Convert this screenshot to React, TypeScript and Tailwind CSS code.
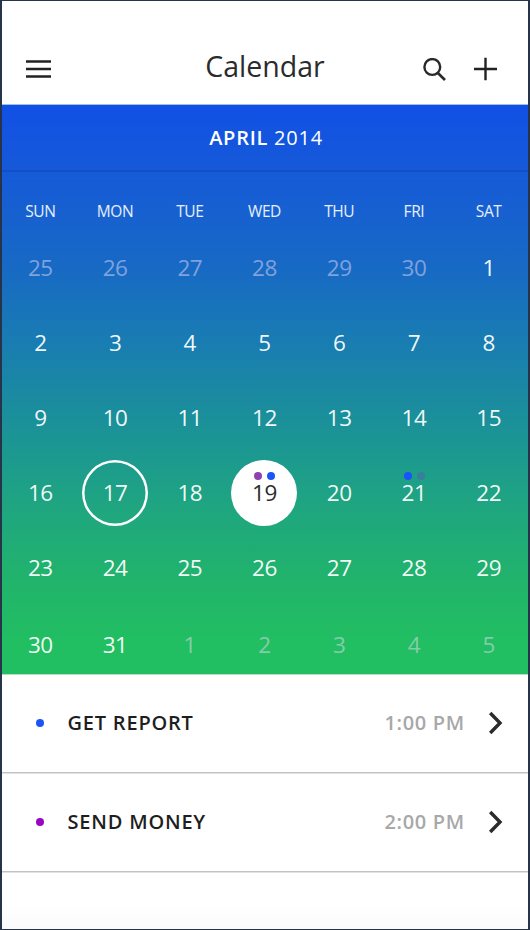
import React from "react";

type Day = { n: number; muted?: boolean; ring?: boolean; selected?: boolean; dots?: string[] };

const WEEKDAYS = ["SUN", "MON", "TUE", "WED", "THU", "FRI", "SAT"];

const range = (from: number, to: number, muted = false): Day[] =>
  Array.from({ length: to - from + 1 }, (_, i) => ({ n: from + i, muted }));

const WEEKS: Day[][] = [
  [...range(25, 30, true), { n: 1 }],
  range(2, 8),
  range(9, 15),
  [
    { n: 16 },
    { n: 17, ring: true },
    { n: 18 },
    { n: 19, selected: true, dots: ["bg-[#8f3fae]", "bg-[#1a55f7]"] },
    { n: 20 },
    { n: 21, dots: ["bg-[#1a55f7]", "bg-[#38809a]"] },
    { n: 22 },
  ],
  range(23, 29),
  [...range(30, 31), ...range(1, 5, true)],
];

const EVENTS = [
  { title: "GET REPORT", time: "1:00 PM", dot: "bg-[#1a55f7]" },
  { title: "SEND MONEY", time: "2:00 PM", dot: "bg-[#9a05c4]" },
];

function DayCell({ day }: { day: Day }) {
  const ring = day.ring ? "shadow-[inset_0_0_0_2.5px_#fff]" : "";
  const fill = day.selected ? "bg-white text-[#2b2b2d]" : day.muted ? "text-[#e6dcf5]/50" : "text-white/95";
  return (
    <div className="flex justify-center">
      <div className={`relative flex size-[66px] shrink-0 items-center justify-center rounded-full ${ring} ${fill}`}>
        <span>{day.n}</span>
        {day.dots && (
          <div className="absolute top-[12px] left-1/2 flex -translate-x-1/2 gap-[5px] pl-px">
            {day.dots.map((d) => (
              <i key={d} className={`size-2 rounded-full ${d}`} />
            ))}
          </div>
        )}
      </div>
    </div>
  );
}

export default function App() {
  return (
    <div className="h-[930px] w-[530px] bg-[#273349] px-0.5 py-px font-['Open_Sans',sans-serif]">
      <div className="flex h-full flex-col bg-gradient-to-b from-white from-97% to-[#fbfbfb]">
        <header className="grid h-[104px] shrink-0 grid-cols-[1fr_auto_1fr] items-center border-b border-[#a9bbe8] bg-white px-6 pt-[31px] text-[#2b2b2d]">
          <svg width="25" height="20" viewBox="0 0 25 20" stroke="#222" strokeWidth="2.3" className="mt-0.5">
            <path d="M0 2.5H25M0 10H25M0 17.5H25" />
          </svg>
          <h1 className="-mt-[3px] text-[28.5px] leading-none">Calendar</h1>
          <div className="mt-0.5 flex items-center justify-end gap-[28px] pr-[7px]">
            <svg width="23" height="23" viewBox="0 0 23 23" fill="none" stroke="#292929" strokeWidth="2.4">
              <circle cx="9.3" cy="9" r="7.9" />
              <path d="M14.6 14.8L22 22" strokeWidth="2.6" />
            </svg>
            <svg width="23" height="24" viewBox="0 0 23 24" stroke="#222" strokeWidth="2.4">
              <path d="M0 12H23M11.5 .8V23.2" />
            </svg>
          </div>
        </header>

        <section className="h-[569px] shrink-0 bg-[linear-gradient(to_bottom,#1150e5_0%,#165bd7_13%,#1769c5_28%,#197db1_42%,#1b9495_58%,#1fa680_71%,#21b46b_84%,#21be62_94%,#21bf62_100%)] text-white">
          <div className="flex h-[67px] items-center justify-center border-b-2 border-[#134fc6] pl-0.5 text-[20px] tracking-[0.75px]">
            <p className="leading-none"><b className="font-semibold">APRIL</b> 2014</p>
          </div>
          <div className="ml-px grid h-[57px] w-[523px] grid-cols-7 pt-[28px] text-center text-[15.5px] leading-[22px] tracking-[-0.4px] text-white/90">
            {WEEKDAYS.map((d) => <span key={d}>{d}</span>)}
          </div>
          <div className="ml-px w-[523px] text-[22.5px] leading-none tracking-[-0.5px]">
            {WEEKS.map((week, i) => (
              <div key={i} className={`grid grid-cols-7 items-center ${i === 5 ? "h-[70px] pt-[8px]" : "h-[75px] pt-[3px]"}`}>
                {week.map((day) => <DayCell key={day.n} day={day} />)}
              </div>
            ))}
          </div>
        </section>

        <ul className="border-t border-[#b8dcc7]">
          {EVENTS.map((e) => (
            <li key={e.title} className="flex h-[99px] items-center border-b border-[#e2e2e2] pr-[25px] pb-[3px] pl-[33.5px] text-[20px] leading-none shadow-[inset_0_-1px_0_#c3c3c3]">
              <i className={`size-2 rounded-full ${e.dot}`} />
              <span className="ml-6 font-semibold tracking-[0.8px] text-[#1e1e1e]">{e.title}</span>
              <span className="ml-auto font-semibold tracking-[0.7px] text-[#a8a8a8]">{e.time}</span>
              <svg width="15" height="24" viewBox="0 0 15 24" fill="none" stroke="#2b2b2b" strokeWidth="3.4" className="ml-[23px]">
                <path d="M2.2 2L12 12L2.2 22" />
              </svg>
            </li>
          ))}
        </ul>
      </div>
    </div>
  );
}
